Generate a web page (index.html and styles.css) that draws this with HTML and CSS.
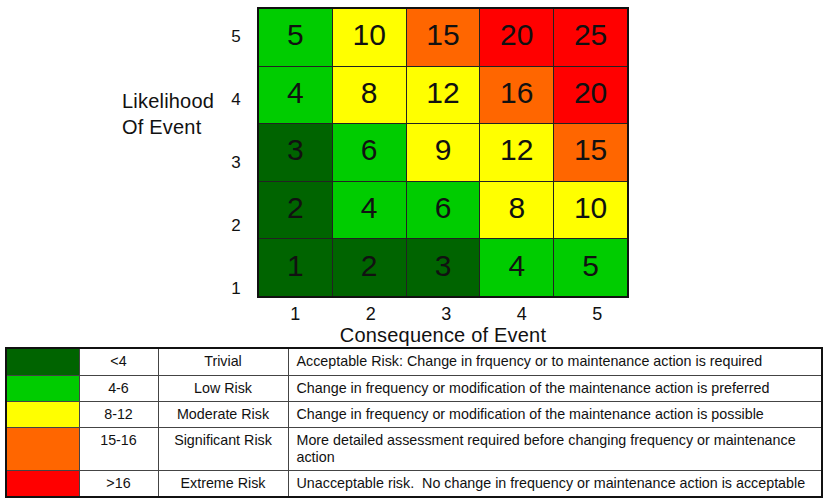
FILE: index.html
```html
<!DOCTYPE html>
<html>
<head>
<meta charset="utf-8">
<link rel="stylesheet" href="styles.css">
</head>
<body>
<div class="chart">
  <div class="ytitle">Likelihood<br>Of Event</div>
  <div class="yticks">
    <span>5</span><span>4</span><span>3</span><span>2</span><span>1</span>
  </div>
  <div class="matrix">
    <div class="cell g">5</div><div class="cell y">10</div><div class="cell o">15</div><div class="cell r">20</div><div class="cell r">25</div>
    <div class="cell g">4</div><div class="cell y">8</div><div class="cell y">12</div><div class="cell o">16</div><div class="cell r">20</div>
    <div class="cell d">3</div><div class="cell g">6</div><div class="cell y">9</div><div class="cell y">12</div><div class="cell o">15</div>
    <div class="cell d">2</div><div class="cell g">4</div><div class="cell g">6</div><div class="cell y">8</div><div class="cell y">10</div>
    <div class="cell d">1</div><div class="cell d">2</div><div class="cell d">3</div><div class="cell g">4</div><div class="cell g">5</div>
  </div>
</div>
<div class="xticks"><span>1</span><span>2</span><span>3</span><span>4</span><span>5</span></div>
<div class="xtitle">Consequence of Event</div>
<table class="legend">
  <tr class="r1"><td class="sw d"></td><td class="c">&lt;4</td><td class="c">Trivial</td><td>Acceptable Risk: Change in frquency or to maintenance action is required</td></tr>
  <tr class="r2"><td class="sw g"></td><td class="c">4-6</td><td class="c">Low Risk</td><td>Change in frequency or modification of the maintenance action is preferred</td></tr>
  <tr class="r3"><td class="sw y"></td><td class="c">8-12</td><td class="c">Moderate Risk</td><td>Change in frequency or modification of the maintenance action is possible</td></tr>
  <tr class="r4"><td class="sw o"></td><td class="c">15-16</td><td class="c">Significant Risk</td><td>More detailed assessment required before changing frequency or maintenance action</td></tr>
  <tr class="r5"><td class="sw r"></td><td class="c">&gt;16</td><td class="c">Extreme Risk</td><td>Unacceptable risk.&nbsp; No change in frequency or maintenance action is acceptable</td></tr>
</table>
</body>
</html>
```
FILE: styles.css
```css
html, body {
  margin: 0;
  padding: 0;
  background: #fff;
}
body {
  font-family: "Liberation Sans", Arial, sans-serif;
  color: #111;
  width: 828px;
  height: 501px;
  overflow: hidden;
}
.chart {
  display: flex;
  align-items: flex-start;
  padding-top: 7px;
}
.ytitle {
  margin-left: 122px;
  width: 104px;
  margin-top: 81px;
  font-size: 20px;
  line-height: 26px;
  letter-spacing: 0.2px;
}
.yticks {
  width: 20px;
  margin-right: 11px;
  display: flex;
  flex-direction: column;
  align-items: center;
  padding-top: 20px;
  gap: 43px;
  font-size: 17px;
  line-height: 20px;
}
.matrix {
  width: 372px;
  height: 291px;
  box-sizing: border-box;
  border: 2px solid #111;
  background: #222;
  display: grid;
  grid-template-columns: repeat(5, 1fr);
  grid-template-rows: repeat(5, 1fr);
  gap: 1px;
}
.cell {
  display: flex;
  align-items: center;
  justify-content: center;
  font-size: 30px;
  color: #111;
  padding-bottom: 4px;
}
.d { background: #006400; }
.g { background: #00cc00; }
.y { background: #ffff00; }
.o { background: #ff6600; }
.r { background: #ff0000; }
.xticks {
  margin-left: 257.5px;
  margin-top: 5px;
  display: grid;
  grid-template-columns: repeat(5, 75.5px);
  text-align: center;
  font-size: 18px;
  line-height: 20px;
}
.xtitle {
  margin-left: 257px;
  width: 372px;
  text-align: center;
  font-size: 20px;
  line-height: 23px;
  letter-spacing: 0.2px;
}
.legend {
  margin-left: 5px;
  width: 818px;
  border-collapse: collapse;
  border: 2px solid #111;
  font-size: 14.3px;
  line-height: 17px;
  table-layout: fixed;
}
.legend td {
  border: 1px solid #444;
  padding: 4px 8px 0 8px;
  vertical-align: top;
  box-sizing: border-box;
}
.legend td.c { text-align: center; padding-left: 2px; padding-right: 2px; }
.legend td.sw { width: 73px; padding: 0; }
.legend td:nth-child(2) { width: 79px; }
.legend td:nth-child(3) { width: 130px; }
.r1 { height: 27px; }
.r2 { height: 26px; }
.r3 { height: 26px; }
.r4 { height: 43px; }
.r5 { height: 27px; }
```
